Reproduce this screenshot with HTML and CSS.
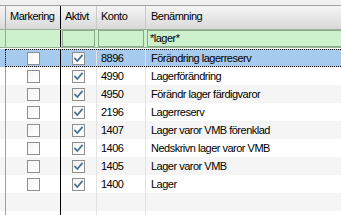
FILE: index.html
```html
<!DOCTYPE html>
<html>
<head>
<meta charset="utf-8">
<link rel="stylesheet" href="styles.css">
</head>
<body>
<div class="grid">
  <div class="topband"></div>
  <div class="row head">
    <div class="c c0"></div>
    <div class="c c1">Markering</div>
    <div class="c c2">Aktivt</div>
    <div class="c c3">Konto</div>
    <div class="c c4">Benämning</div>
  </div>
  <div class="row filter">
    <div class="c c0"></div>
    <div class="c c1"></div>
    <div class="c c2"><div class="fbox"></div></div>
    <div class="c c3"><div class="fbox"></div></div>
    <div class="c c4"><div class="fbox fwide">*lager*</div></div>
  </div>
  <div class="gap"></div>
  <div class="row data sel">
    <div class="c c0"></div>
    <div class="c c1"><span class="cb"></span></div>
    <div class="c c2"><span class="cb"><svg viewBox="0 0 11 11"><polyline points="2,5.5 4.3,8 9,2.5"/></svg></span></div>
    <div class="c c3">8896</div>
    <div class="c c4">Förändring lagerreserv</div>
  </div>
  <div class="row data">
    <div class="c c0"></div>
    <div class="c c1"><span class="cb"></span></div>
    <div class="c c2"><span class="cb"><svg viewBox="0 0 11 11"><polyline points="2,5.5 4.3,8 9,2.5"/></svg></span></div>
    <div class="c c3">4990</div>
    <div class="c c4">Lagerförändring</div>
  </div>
  <div class="row data alt">
    <div class="c c0"></div>
    <div class="c c1"><span class="cb"></span></div>
    <div class="c c2"><span class="cb"><svg viewBox="0 0 11 11"><polyline points="2,5.5 4.3,8 9,2.5"/></svg></span></div>
    <div class="c c3">4950</div>
    <div class="c c4">Förändr lager färdigvaror</div>
  </div>
  <div class="row data">
    <div class="c c0"></div>
    <div class="c c1"><span class="cb"></span></div>
    <div class="c c2"><span class="cb"><svg viewBox="0 0 11 11"><polyline points="2,5.5 4.3,8 9,2.5"/></svg></span></div>
    <div class="c c3">2196</div>
    <div class="c c4">Lagerreserv</div>
  </div>
  <div class="row data alt">
    <div class="c c0"></div>
    <div class="c c1"><span class="cb"></span></div>
    <div class="c c2"><span class="cb"><svg viewBox="0 0 11 11"><polyline points="2,5.5 4.3,8 9,2.5"/></svg></span></div>
    <div class="c c3">1407</div>
    <div class="c c4">Lager varor VMB förenklad</div>
  </div>
  <div class="row data">
    <div class="c c0"></div>
    <div class="c c1"><span class="cb"></span></div>
    <div class="c c2"><span class="cb"><svg viewBox="0 0 11 11"><polyline points="2,5.5 4.3,8 9,2.5"/></svg></span></div>
    <div class="c c3">1406</div>
    <div class="c c4">Nedskrivn lager varor VMB</div>
  </div>
  <div class="row data alt">
    <div class="c c0"></div>
    <div class="c c1"><span class="cb"></span></div>
    <div class="c c2"><span class="cb"><svg viewBox="0 0 11 11"><polyline points="2,5.5 4.3,8 9,2.5"/></svg></span></div>
    <div class="c c3">1405</div>
    <div class="c c4">Lager varor VMB</div>
  </div>
  <div class="row data">
    <div class="c c0"></div>
    <div class="c c1"><span class="cb"></span></div>
    <div class="c c2"><span class="cb"><svg viewBox="0 0 11 11"><polyline points="2,5.5 4.3,8 9,2.5"/></svg></span></div>
    <div class="c c3">1400</div>
    <div class="c c4">Lager</div>
  </div>
  <div class="row data alt">
    <div class="c c0"></div>
    <div class="c c1"></div>
    <div class="c c2"></div>
    <div class="c c3"></div>
    <div class="c c4"></div>
  </div>
  <div class="row data short">
    <div class="c c0"></div>
    <div class="c c1"></div>
    <div class="c c2"></div>
    <div class="c c3"></div>
    <div class="c c4"></div>
  </div>
</div>
</body>
</html>
```
FILE: styles.css
```css
html, body {
  margin: 0;
  padding: 0;
  background: #ffffff;
}
body {
  font-family: "Liberation Sans", Arial, sans-serif;
  font-size: 11px;
  letter-spacing: -0.5px;
  color: #000;
}
.grid {
  width: 341px;
}
.topband {
  height: 5px;
  background: #f0f0f0;
  border-bottom: 1px solid #a0a0a0;
}
.row {
  display: grid;
  grid-template-columns: 6px 55px 36px 49px 1fr;
}
.c {
  box-sizing: border-box;
  border-right: 1px solid #e3e3e3;
  white-space: nowrap;
  overflow: hidden;
}
.c0 { border-right-color: #a0a0a0; }
.c1 { border-right-color: #000000; padding-left: 4px; }
.c2 { padding-left: 4px; }
.c3 { padding-left: 4px; }
.c4 { padding-left: 5px; border-right: none; }

.head {
  height: 23px;
  line-height: 20px;
  background: linear-gradient(#f5f5f5, #d9d9d9);
}
.head .c2, .head .c3 { border-right-color: #c9c9c9; }

.filter {
  height: 19px;
  background: #cdf0cd;
  border-top: 1px solid #98b498;
  border-bottom: 1px solid #98b498;
  box-sizing: border-box;
}
.filter .c2, .filter .c3, .filter .c4 {
  border-right-color: transparent;
  padding: 0;
}
.fbox {
  box-sizing: border-box;
  height: 17px;
  margin: 0 1px;
  border: 1px solid #87aa87;
  background: #cdf0cd;
  line-height: 15px;
  padding-left: 2px;
}
.fwide {
  border-right: none;
  margin-right: 0;
}
.gap {
  height: 1px;
  background: #ffffff;
}
.data {
  height: 18px;
  line-height: 18px;
  background: #ffffff;
}
.data.short { height: 4px; }
.data.alt { background: #f5f5f5; }
.data.sel {
  background: #a6cbee;
  position: relative;
  overflow: hidden;
}
.data.sel::after {
  content: "";
  position: absolute;
  left: 5px;
  top: 0;
  right: -2px;
  bottom: 0;
  border: 1px dotted #000;
}
.data .c1, .data .c2 {
  display: flex;
  align-items: center;
  justify-content: center;
  padding: 0;
}
.cb {
  display: block;
  box-sizing: border-box;
  width: 13px;
  height: 13px;
  border: 1px solid #8e8f8f;
  background: linear-gradient(135deg, #f4f4f4, #ffffff);
}
.cb svg {
  display: block;
  width: 11px;
  height: 11px;
}
.cb polyline {
  fill: none;
  stroke: #46708f;
  stroke-width: 1.7;
  stroke-linecap: square;
  stroke-linejoin: miter;
}
```
